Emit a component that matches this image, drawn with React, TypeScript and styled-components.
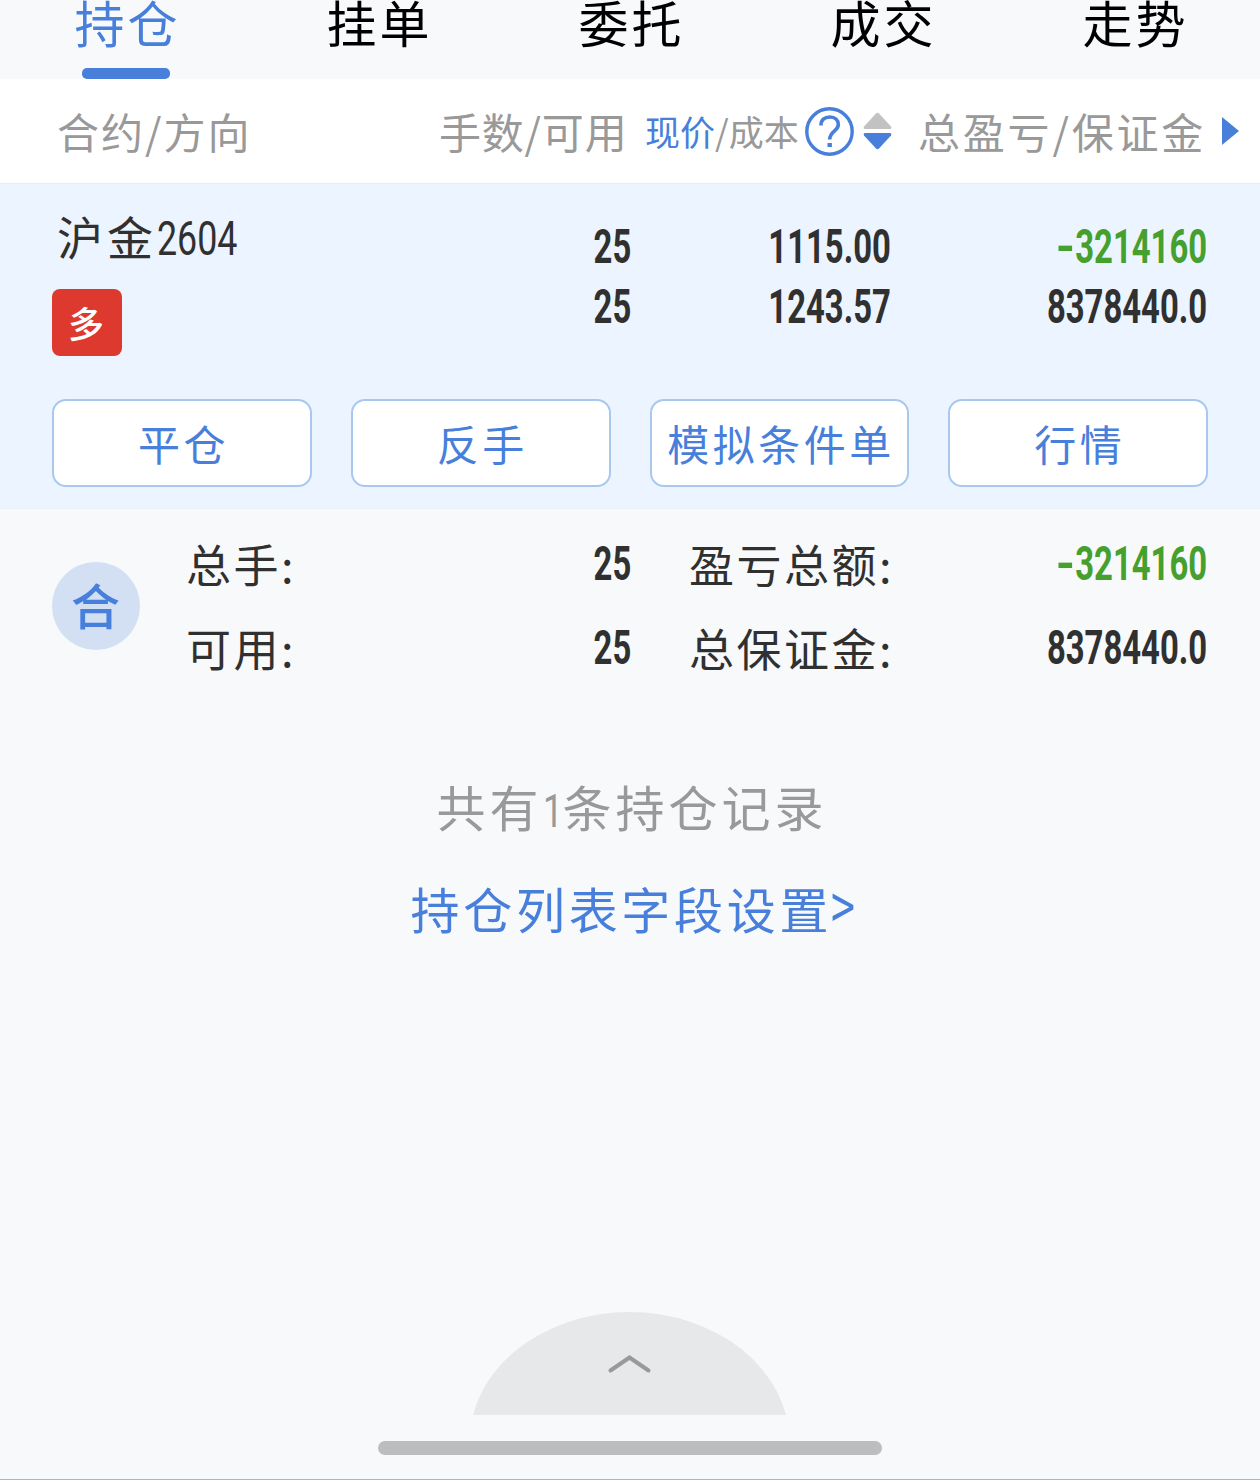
import React from "react";
import styled, { createGlobalStyle } from "styled-components";

const blue = "#477fdb";
const green = "#45a02e";
const ink = "#303030";
const grey = "#999999";

const GlobalStyle = createGlobalStyle`
  * { box-sizing: border-box; }
  body {
    margin: 0;
    background: #f7f9fb;
    color: ${ink};
    font-family: "Noto Sans CJK SC", sans-serif;
  }
`;

const Screen = styled.div`
  display: flex;
  flex-direction: column;
  width: 1260px;
  height: 1480px;
  overflow: hidden;
  background: #f7f9fb;
  border-bottom: 1px solid #b2b4b6;
`;

const Label = styled.span<{ $size: number; $gap?: number; $color?: string }>`
  display: inline-block;
  flex: none;
  font-size: ${(p) => p.$size}px;
  line-height: 60px;
  letter-spacing: ${(p) => p.$gap ?? 0}px;
  margin-right: ${(p) => -(p.$gap ?? 0)}px;
  color: ${(p) => p.$color ?? "inherit"};
  white-space: nowrap;
`;

const Tabs = styled.nav`
  display: grid;
  grid-template-columns: repeat(5, 1fr);
  height: 79px;
  flex: none;
`;

const Tab = styled.div<{ $active?: boolean }>`
  display: flex;
  flex-direction: column;
  align-items: center;
  justify-content: space-between;
  color: ${(p) => (p.$active ? blue : "#000")};
`;

const TabText = styled(Label)`
  line-height: 42px;
`;

const Underline = styled.div`
  width: 88px;
  height: 11px;
  border-radius: 5px;
  background: ${blue};
`;

const Header = styled.div`
  display: flex;
  align-items: center;
  height: 105px;
  flex: none;
  padding: 0 21px 0 57px;
  background: #fff;
  border-bottom: 1px solid #e9eef5;
  color: ${grey};
`;

const HeaderLots = styled.div`
  display: flex;
  width: 188px;
  margin-left: auto;
`;

const HeaderPrice = styled.div`
  display: flex;
  align-items: center;
  width: 247px;
  margin-left: 18px;
  svg { flex: none; }
`;

const HeaderProfit = styled.div`
  display: flex;
  width: 287px;
  margin: 0 17px 0 26px;
`;

const PriceName = styled.div`
  width: 160px;
`;

const SortIcon = styled.svg`
  margin-left: 9px;
`;

const Holding = styled.section`
  height: 325px;
  flex: none;
  padding: 33px 52px 0;
  background: #ecf4ff;
  border-bottom: 1px solid #eceff3;
`;

const HoldingInfo = styled.div`
  display: grid;
  grid-template-columns: 299px 280px 260px 316px;
  height: 182px;
`;

const Contract = styled.div`
  display: flex;
  flex-direction: column;
  align-items: flex-start;
  padding-left: 5px;
  margin-top: -12px;
`;

const Badge = styled.div`
  display: flex;
  align-items: center;
  justify-content: center;
  width: 70px;
  height: 67px;
  margin: 20px 0 0 -5px;
  padding: 0 2px 1px 0;
  border-radius: 8px;
  background: #dd392f;
  color: #fff;
  font-size: 36px;
  font-weight: 500;
  line-height: 60px;
`;

const Figures = styled.div`
  display: flex;
  flex-direction: column;
  align-items: flex-end;
`;

const Num = styled.span<{ $color?: string }>`
  display: block;
  font-family: Roboto, "Liberation Sans", sans-serif;
  font-size: 49px;
  font-weight: 700;
  line-height: 60px;
  white-space: nowrap;
  color: ${(p) => p.$color ?? ink};
  transform: scaleX(0.67);
  transform-origin: right center;
`;

const Minus = styled.span`
  display: inline-block;
  transform: scaleX(1.5);
  transform-origin: right center;
`;

const Code = styled.span`
  display: inline-block;
  font-family: Roboto, "Liberation Sans", sans-serif;
  font-size: 49px;
  letter-spacing: 0;
  transform: scaleX(0.73);
  transform-origin: left center;
`;

const Count = styled.span`
  display: inline-block;
  width: 20px;
  font-family: Roboto, "Liberation Sans", sans-serif;
  font-size: 47px;
  line-height: 1;
  transform: scaleX(0.75);
  transform-origin: left center;
`;

const Arrow = styled.span`
  display: inline-block;
  width: 22px;
  margin-left: -1px;
  line-height: 1;
  transform: translateY(-3px) scale(0.88, 1.25);
  transform-origin: left 62%;
`;

const Actions = styled.div`
  display: grid;
  grid-template-columns: repeat(4, 1fr);
  gap: 39px;
`;

const Action = styled.button`
  display: flex;
  align-items: center;
  justify-content: center;
  height: 88px;
  min-width: 0;
  padding: 0;
  border: 2px solid #a8c8ee;
  border-radius: 14px;
  background: #fff;
  color: ${blue};
  font-family: inherit;
`;

const Summary = styled.section`
  display: grid;
  grid-template-columns: 134px 201px 244px 58px 258px 260px;
  grid-template-rows: 84px 84px;
  align-items: center;
  height: 168px;
  flex: none;
  margin-top: 13px;
  padding: 0 52px;
`;

const Total = styled.div`
  display: flex;
  align-items: center;
  justify-content: center;
  grid-row: 1 / 3;
  width: 88px;
  height: 88px;
  padding: 0 1px 5px 0;
  border-radius: 50%;
  background: #d3e0f4;
  color: ${blue};
  font-size: 49px;
  font-weight: 500;
  line-height: 60px;
`;

const SummaryLabel = styled(Label)<{ $column: number }>`
  grid-column: ${(p) => p.$column};
`;

const SummaryFigure = styled.div<{ $column: number }>`
  display: flex;
  justify-content: flex-end;
  grid-column: ${(p) => p.$column};
`;

const Notes = styled.div`
  display: flex;
  flex-direction: column;
  align-items: center;
  gap: 42px;
  margin-top: 86px;
`;

const NoteLine = styled.div`
  display: flex;
  height: 60px;
`;

const Footer = styled.footer`
  display: flex;
  flex-direction: column;
  align-items: center;
  margin-top: auto;
  padding: 0 1px 24px 0;
`;

const HomeBar = styled.div`
  width: 504px;
  height: 14px;
  margin-top: 26px;
  border-radius: 7px;
  background: #bbbdbf;
`;

const tabs = ["持仓", "挂单", "委托", "成交", "走势"];
const actions = ["平仓", "反手", "模拟条件单", "行情"];

export default function App() {
  return (
    <Screen>
      <GlobalStyle />
      <Tabs>
        {tabs.map((name, i) => (
          <Tab key={name} $active={i === 0}>
            <TabText $size={50} $gap={3}>{name}</TabText>
            {i === 0 && <Underline />}
          </Tab>
        ))}
      </Tabs>

      <Header>
        <Label $size={42} $gap={2}>合约/方向</Label>
        <HeaderLots>
          <Label $size={42} $gap={0.8}>手数/可用</Label>
        </HeaderLots>
        <HeaderPrice>
          <PriceName>
            <Label $size={35}>
              <Label $size={35} $color={blue}>现价</Label>/成本
            </Label>
          </PriceName>
          <svg width="49" height="49" viewBox="0 0 49 49" fill="none" stroke={blue}>
            <circle cx="24.5" cy="24.5" r="22.7" strokeWidth="3.4" />
            <path d="M16 18.5C16 13 19.5 10 24.8 10C30 10 33.3 13 33.3 17.5C33.3 24.5 24.7 24 24.7 32.5" strokeWidth="3.6" />
            <path d="M24.7 36V40" strokeWidth="4.4" />
          </svg>
          <SortIcon width="29" height="38" viewBox="0 0 29 38">
            <path d="M13 1.500Q14.500 0 16 1.500L28 14.500Q29 17 27 17H2Q0 17 1 14.500Z" fill="#c2c2c2" />
            <path d="M13 36.500Q14.500 38 16 36.500L28 23.500Q29 21 27 21H2Q0 21 1 23.500Z" fill={blue} />
          </SortIcon>
        </HeaderPrice>
        <HeaderProfit>
          <Label $size={42} $gap={2.8}>总盈亏/保证金</Label>
        </HeaderProfit>
        <svg width="17" height="28" viewBox="0 0 17 28">
          <path d="M0 0L17 14L0 28Z" fill={blue} />
        </svg>
      </Header>

      <Holding>
        <HoldingInfo>
          <Contract>
            <Label $size={46} $gap={4}>沪金<Code>2604</Code></Label>
            <Badge>多</Badge>
          </Contract>
          <Figures>
            <Num>25</Num>
            <Num>25</Num>
          </Figures>
          <Figures>
            <Num>1115.00</Num>
            <Num>1243.57</Num>
          </Figures>
          <Figures>
            <Num $color={green}><Minus>-</Minus>3214160</Num>
            <Num>8378440.0</Num>
          </Figures>
        </HoldingInfo>
        <Actions>
          {actions.map((name) => (
            <Action key={name}>
              <Label $size={42} $gap={3.5}>{name}</Label>
            </Action>
          ))}
        </Actions>
      </Holding>

      <Summary>
        <Total>合</Total>
        <SummaryLabel $column={2} $size={45} $gap={2.5}>总手:</SummaryLabel>
        <SummaryFigure $column={3}><Num>25</Num></SummaryFigure>
        <SummaryLabel $column={5} $size={45} $gap={2.5}>盈亏总额:</SummaryLabel>
        <SummaryFigure $column={6}><Num $color={green}><Minus>-</Minus>3214160</Num></SummaryFigure>
        <SummaryLabel $column={2} $size={45} $gap={2.5}>可用:</SummaryLabel>
        <SummaryFigure $column={3}><Num>25</Num></SummaryFigure>
        <SummaryLabel $column={5} $size={45} $gap={2.5}>总保证金:</SummaryLabel>
        <SummaryFigure $column={6}><Num>8378440.0</Num></SummaryFigure>
      </Summary>

      <Notes>
        <NoteLine>
          <Label $size={49} $gap={4} $color={grey}>共有<Count>1</Count>条持仓记录</Label>
        </NoteLine>
        <NoteLine>
          <Label $size={49} $gap={3.7} $color={blue}>持仓列表字段设置<Arrow>&gt;</Arrow></Label>
        </NoteLine>
      </Notes>

      <Footer>
        <svg width="313" height="103" viewBox="0 0 313 103">
          <ellipse cx="156.500" cy="130" rx="160" ry="130" fill="#e7e8ea" />
          <path d="M137.500 58.500L156.500 45.500L175.500 58.500" fill="none" stroke="#999" strokeWidth="4" strokeLinecap="round" />
        </svg>
        <HomeBar />
      </Footer>
    </Screen>
  );
}
